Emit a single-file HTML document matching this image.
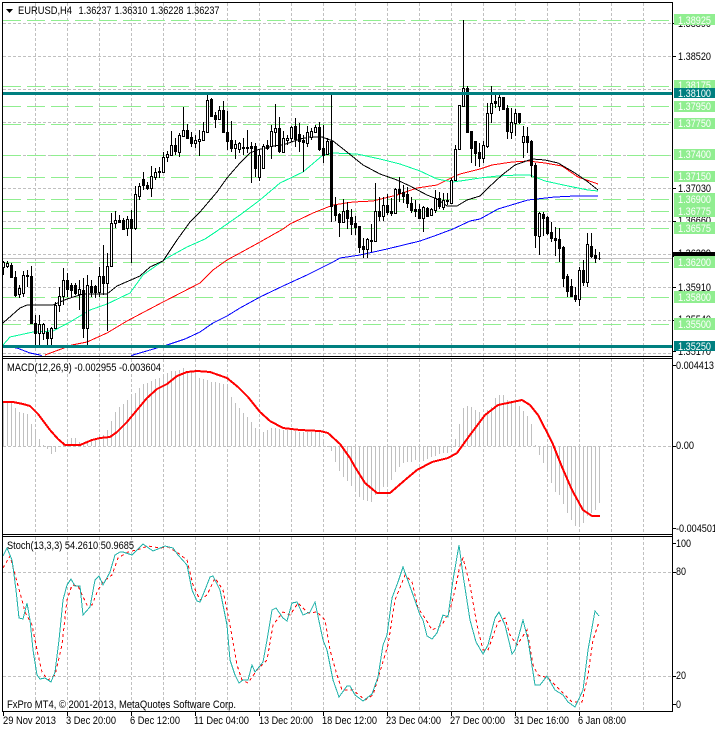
<!DOCTYPE html>
<html><head><meta charset="utf-8"><style>
html,body{margin:0;padding:0;background:#fff;width:715px;height:729px;overflow:hidden}
svg{display:block}
text{font-family:"Liberation Sans",sans-serif;font-size:11px;fill:#000}
.w text,text.w{fill:#fff}
.c{shape-rendering:crispEdges;fill:none}
</style></head><body>
<svg width="715" height="729" viewBox="0 0 715 729" xmlns="http://www.w3.org/2000/svg">
<defs><clipPath id="m"><rect x="3" y="3" width="669" height="353"/></clipPath></defs>
<rect width="715" height="729" fill="#fff"/>

<!-- grid -->
<g class="c" stroke="#c0c0c0" stroke-dasharray="3 2">
<path id="vg1" d="M35.5 3V356M67.5 3V356M99.5 3V356M131.5 3V356M163.5 3V356M195.5 3V356M227.5 3V356M259.5 3V356M291.5 3V356M323.5 3V356M355.5 3V356M387.5 3V356M419.5 3V356M451.5 3V356M483.5 3V356M515.5 3V356M547.5 3V356M579.5 3V356M611.5 3V356M643.5 3V356"/>
<path d="M35.5 359V534M67.5 359V534M99.5 359V534M131.5 359V534M163.5 359V534M195.5 359V534M227.5 359V534M259.5 359V534M291.5 359V534M323.5 359V534M355.5 359V534M387.5 359V534M419.5 359V534M451.5 359V534M483.5 359V534M515.5 359V534M547.5 359V534M579.5 359V534M611.5 359V534M643.5 359V534"/>
<path d="M35.5 537V711M67.5 537V711M99.5 537V711M131.5 537V711M163.5 537V711M195.5 537V711M227.5 537V711M259.5 537V711M291.5 537V711M323.5 537V711M355.5 537V711M387.5 537V711M419.5 537V711M451.5 537V711M483.5 537V711M515.5 537V711M547.5 537V711M579.5 537V711M611.5 537V711M643.5 537V711"/>
<path d="M3 23.5H672M3 56.5H672M3 89.5H672M3 122.5H672M3 155.5H672M3 188.5H672M3 221.5H672M3 254.5H672M3 287.5H672M3 320.5H672M3 353.5H672M3 446.5H672M3 572.5H672M3 676.5H672"/>
</g>
<path class="c" stroke="#c0c0c0" d="M3 258.5H672"/>

<!-- green levels -->
<path class="c" stroke="#90ee90" stroke-dasharray="18 6" d="M3 20.5H672M3 86.5H672M3 106.5H672M3 124.5H672M3 155.5H672M3 177.5H672M3 199.5H672M3 211.5H672M3 228.5H672M3 262.5H672M3 297.5H672M3 324.5H672"/>

<g clip-path="url(#m)">
<!-- MAs -->
<polyline class="c" stroke="#0000ff" points="3,346 17,348 30,353 40,355 45,358 128,358 133,355 150,350 167,345 185,339 200,332 213,323 227,316 240,308 260,297 283,286 307,275 333,262 340,258 360,255 387,249 420,241 437,235 453,229 470,221 480,219 498,209 518,203 528,200 555,197 575,196 598,196"/>
<polyline class="c" stroke="#ff0000" points="45,355 72,345 87,342 107,333 127,321 163,302 200,283 213,270 227,260 240,253 260,242 283,229 290,224 313,213 333,205 353,202 373,201 397,195 417,188 437,185 453,177 460,174 480,169 492,165 512,162 528,161 545,163 562,166 578,177 598,184"/>
<polyline class="c" stroke="#00fa9a" points="3,345 10,337 33,332 53,331 70,322 90,310 107,304 130,293 143,275 167,258 187,247 205,239 217,231 240,215 260,200 280,183 303,172 323,155 333,153 357,154 380,159 400,164 420,171 437,179 453,182 467,180 480,178 498,176 518,175 530,175 545,181 568,186 588,190 598,191"/>
<polyline class="c" stroke="#000" points="3,323 20,308 27,305 53,305 67,299 83,294 107,294 117,286 140,276 150,267 163,261 177,240 190,222 200,212 217,192 227,178 240,163 250,153 257,150 273,146 283,145 300,139 310,137 322,137 333,141 347,152 363,165 380,174 397,180 410,186 427,195 437,199 447,206 457,206 467,200 480,196 488,188 502,175 515,165 532,159 545,160 558,163 575,173 588,182 598,190"/>

<!-- wicks -->
<path class="c" stroke="#000" d="M3.5 261V275M7.5 261V268M11.5 263V277M15.5 271V297M19.5 285V298M23.5 271V297M27.5 270V287M31.5 266V323M35.5 315V347M39.5 315V347M43.5 323V340M47.5 328V347M51.5 327V345M55.5 302V328M59.5 287V312M63.5 268V305M67.5 273V297M71.5 283V297M75.5 283V295M79.5 280V310M83.5 278V338M87.5 275V345M91.5 280V297M95.5 285V298M99.5 267V297M103.5 245V295M107.5 253V331M111.5 213V267M115.5 211V228M119.5 215V223M123.5 218V230M127.5 216V236M131.5 210V263M135.5 186V230M139.5 183V200M143.5 172V190M147.5 182V190M151.5 166V197M155.5 168V180M159.5 167V178M163.5 152V172M167.5 151V162M171.5 131V155M175.5 138V155M179.5 133V157M183.5 107V137M187.5 124V138M191.5 132V147M195.5 135V148M199.5 130V156M203.5 122V140M207.5 93V132M211.5 98V117M215.5 112V128M219.5 106V119M223.5 101V133M227.5 111V150M231.5 121V152M235.5 140V159M239.5 142V153M243.5 138V155M247.5 130V153M251.5 142V183M255.5 143V177M259.5 150V181M263.5 144V168M267.5 140V150M271.5 125V159M275.5 104V147M279.5 117V153M283.5 131V152M287.5 135V145M291.5 126V142M295.5 118V147M299.5 123V152M303.5 135V172M307.5 126V147M311.5 128V140M315.5 125V133M319.5 122V151M323.5 125V163M327.5 138V155M331.5 93V222M335.5 197V221M339.5 213V237M343.5 199V223M347.5 202V229M351.5 209V235M355.5 216V235M359.5 226V253M363.5 238V258M367.5 238V258M371.5 224V252M375.5 183V241M379.5 197V221M383.5 197V221M387.5 194V215M391.5 198V216M395.5 188V213M399.5 177V202M403.5 185V203M407.5 187V208M411.5 197V213M415.5 200V217M419.5 204V218M423.5 206V232M427.5 207V217M431.5 208V215M435.5 190V213M439.5 192V209M443.5 193V210M447.5 193V205M451.5 178V204M455.5 145V181M459.5 105V149M463.5 20V107M467.5 86V132M471.5 131V163M475.5 141V166M479.5 143V167M483.5 141V163M487.5 103V148M491.5 86V123M495.5 93V108M499.5 93V111M503.5 97V110M507.5 105V139M511.5 108V139M515.5 109V136M519.5 113V124M523.5 126V158M527.5 127V153M531.5 140V177M535.5 163V248M539.5 212V255M543.5 212V236M547.5 216V235M551.5 222V242M555.5 227V256M559.5 228V262M563.5 246V287M567.5 274V297M571.5 279V297M575.5 287V302M579.5 267V306M583.5 260V286M587.5 233V287M591.5 233V258M595.5 249V263M599.5 252V260"/>

<!-- white bodies -->
<path class="c" style="fill:#fff" stroke="#000" d="M2.5 262.5h2V267.5h-2zM6.5 263.5h2V266.5h-2zM18.5 288.5h2V294.5h-2zM22.5 275.5h2V293.5h-2zM38.5 324.5h2V333.5h-2zM42.5 324.5h2V333.5h-2zM50.5 328.5h2V338.5h-2zM54.5 305.5h2V328.5h-2zM58.5 296.5h2V305.5h-2zM62.5 280.5h2V296.5h-2zM78.5 289.5h2V294.5h-2zM86.5 285.5h2V328.5h-2zM98.5 276.5h2V292.5h-2zM106.5 266.5h2V283.5h-2zM110.5 223.5h2V266.5h-2zM114.5 220.5h2V223.5h-2zM126.5 219.5h2V228.5h-2zM134.5 194.5h2V228.5h-2zM138.5 186.5h2V196.5h-2zM150.5 176.5h2V188.5h-2zM154.5 172.5h2V177.5h-2zM158.5 171.5h2V172.5h-2zM162.5 157.5h2V172.5h-2zM166.5 154.5h2V157.5h-2zM170.5 145.5h2V155.5h-2zM178.5 135.5h2V152.5h-2zM182.5 130.5h2V136.5h-2zM194.5 140.5h2V143.5h-2zM198.5 139.5h2V141.5h-2zM202.5 131.5h2V140.5h-2zM206.5 100.5h2V132.5h-2zM218.5 110.5h2V119.5h-2zM234.5 144.5h2V148.5h-2zM238.5 143.5h2V149.5h-2zM258.5 155.5h2V177.5h-2zM262.5 146.5h2V168.5h-2zM270.5 131.5h2V146.5h-2zM274.5 128.5h2V132.5h-2zM282.5 138.5h2V152.5h-2zM286.5 138.5h2V140.5h-2zM290.5 127.5h2V138.5h-2zM306.5 132.5h2V143.5h-2zM310.5 131.5h2V137.5h-2zM314.5 127.5h2V132.5h-2zM326.5 141.5h2V154.5h-2zM342.5 211.5h2V222.5h-2zM366.5 239.5h2V249.5h-2zM374.5 211.5h2V241.5h-2zM382.5 205.5h2V216.5h-2zM394.5 189.5h2V213.5h-2zM422.5 207.5h2V218.5h-2zM430.5 209.5h2V215.5h-2zM434.5 198.5h2V210.5h-2zM442.5 200.5h2V207.5h-2zM450.5 180.5h2V203.5h-2zM454.5 149.5h2V180.5h-2zM458.5 105.5h2V149.5h-2zM462.5 88.5h2V106.5h-2zM482.5 145.5h2V158.5h-2zM486.5 113.5h2V146.5h-2zM490.5 103.5h2V113.5h-2zM498.5 97.5h2V106.5h-2zM510.5 122.5h2V132.5h-2zM514.5 113.5h2V123.5h-2zM522.5 136.5h2V142.5h-2zM538.5 213.5h2V236.5h-2zM578.5 270.5h2V299.5h-2zM586.5 244.5h2V282.5h-2z"/>

<!-- black bodies -->
<path class="c" style="fill:#000" stroke="#000" d="M10.5 265.5h2V277.5h-2zM14.5 277.5h2V295.5h-2zM26.5 275.5h2V276.5h-2zM30.5 276.5h2V323.5h-2zM34.5 323.5h2V333.5h-2zM46.5 332.5h2V338.5h-2zM66.5 280.5h2V289.5h-2zM70.5 285.5h2V290.5h-2zM74.5 285.5h2V293.5h-2zM82.5 290.5h2V328.5h-2zM90.5 286.5h2V292.5h-2zM94.5 286.5h2V292.5h-2zM102.5 276.5h2V283.5h-2zM118.5 220.5h2V222.5h-2zM122.5 220.5h2V229.5h-2zM130.5 219.5h2V228.5h-2zM142.5 179.5h2V185.5h-2zM146.5 185.5h2V188.5h-2zM174.5 145.5h2V151.5h-2zM186.5 130.5h2V138.5h-2zM190.5 137.5h2V143.5h-2zM210.5 99.5h2V116.5h-2zM214.5 115.5h2V119.5h-2zM222.5 110.5h2V132.5h-2zM226.5 132.5h2V141.5h-2zM230.5 140.5h2V148.5h-2zM242.5 147.5h2V148.5h-2zM246.5 147.5h2V148.5h-2zM250.5 146.5h2V148.5h-2zM254.5 146.5h2V168.5h-2zM266.5 145.5h2V148.5h-2zM278.5 128.5h2V151.5h-2zM294.5 126.5h2V139.5h-2zM298.5 134.5h2V141.5h-2zM302.5 140.5h2V142.5h-2zM318.5 127.5h2V149.5h-2zM322.5 148.5h2V155.5h-2zM330.5 141.5h2V206.5h-2zM334.5 205.5h2V215.5h-2zM338.5 214.5h2V222.5h-2zM346.5 210.5h2V218.5h-2zM350.5 217.5h2V224.5h-2zM354.5 223.5h2V227.5h-2zM358.5 226.5h2V247.5h-2zM362.5 246.5h2V249.5h-2zM370.5 240.5h2V241.5h-2zM378.5 211.5h2V216.5h-2zM386.5 205.5h2V212.5h-2zM390.5 211.5h2V213.5h-2zM398.5 189.5h2V193.5h-2zM402.5 192.5h2V196.5h-2zM406.5 194.5h2V203.5h-2zM410.5 203.5h2V210.5h-2zM414.5 209.5h2V211.5h-2zM418.5 209.5h2V218.5h-2zM426.5 208.5h2V216.5h-2zM438.5 198.5h2V206.5h-2zM446.5 200.5h2V201.5h-2zM466.5 88.5h2V132.5h-2zM470.5 131.5h2V148.5h-2zM474.5 141.5h2V153.5h-2zM478.5 152.5h2V158.5h-2zM494.5 101.5h2V103.5h-2zM502.5 97.5h2V109.5h-2zM506.5 108.5h2V131.5h-2zM518.5 113.5h2V122.5h-2zM526.5 136.5h2V142.5h-2zM530.5 141.5h2V165.5h-2zM534.5 165.5h2V235.5h-2zM542.5 214.5h2V218.5h-2zM546.5 217.5h2V233.5h-2zM550.5 232.5h2V238.5h-2zM554.5 238.5h2V240.5h-2zM558.5 239.5h2V248.5h-2zM562.5 247.5h2V278.5h-2zM566.5 276.5h2V291.5h-2zM570.5 286.5h2V296.5h-2zM574.5 295.5h2V299.5h-2zM582.5 270.5h2V282.5h-2zM590.5 246.5h2V256.5h-2zM594.5 255.5h2V258.5h-2zM598.5 258.5h2V258.5h-2z"/>
</g>

<!-- teal levels -->
<rect x="3" y="92" width="669" height="3" fill="#008080"/>
<rect x="3" y="345" width="669" height="3" fill="#008080"/>

<!-- MACD histogram -->
<path class="c" stroke="#c0c0c0" d="M3.5 446V402M7.5 446V402M11.5 446V403M15.5 446V408M19.5 446V412M23.5 446V413M27.5 446V414M31.5 446V424M35.5 446V432M39.5 446V439M43.5 446V445M47.5 446V449M51.5 446V454M55.5 446V452M59.5 446V447M63.5 446V442M67.5 446V440M71.5 446V438M75.5 446V438M79.5 446V442M83.5 446V443M87.5 446V443M91.5 446V440M95.5 446V438M99.5 446V435M103.5 446V435M107.5 446V430M111.5 446V421M115.5 446V412M119.5 446V407M123.5 446V404M127.5 446V400M131.5 446V394M135.5 446V393M139.5 446V388M143.5 446V384M147.5 446V383M151.5 446V381M155.5 446V379M159.5 446V378M163.5 446V375M167.5 446V373M171.5 446V371M175.5 446V371M179.5 446V370M183.5 446V368M187.5 446V371M191.5 446V372M195.5 446V372M199.5 446V378M203.5 446V379M207.5 446V380M211.5 446V382M215.5 446V382M219.5 446V383M223.5 446V384M227.5 446V387M231.5 446V397M235.5 446V403M239.5 446V408M243.5 446V413M247.5 446V417M251.5 446V422M255.5 446V428M259.5 446V431M263.5 446V432M267.5 446V430M271.5 446V428M275.5 446V428M279.5 446V429M283.5 446V430M287.5 446V430M291.5 446V431M295.5 446V431M299.5 446V432M303.5 446V432M307.5 446V432M311.5 446V432M315.5 446V432M319.5 446V432M323.5 446V440M327.5 446V447M331.5 446V451M335.5 446V462M339.5 446V471M343.5 446V477M347.5 446V481M351.5 446V486M355.5 446V491M359.5 446V497M363.5 446V500M367.5 446V501M371.5 446V502M375.5 446V495M379.5 446V492M383.5 446V487M387.5 446V485M391.5 446V480M395.5 446V472M399.5 446V467M403.5 446V463M407.5 446V462M411.5 446V462M415.5 446V460M419.5 446V461M423.5 446V461M427.5 446V459M431.5 446V457M435.5 446V456M439.5 446V454M443.5 446V453M447.5 446V453M451.5 446V448M455.5 446V439M459.5 446V424M463.5 446V408M467.5 446V406M471.5 446V407M475.5 446V410M479.5 446V412M483.5 446V415M487.5 446V410M491.5 446V407M495.5 446V398M499.5 446V395M503.5 446V395M507.5 446V400M511.5 446V401M515.5 446V400M519.5 446V406M523.5 446V411M527.5 446V416M531.5 446V424M535.5 446V445M539.5 446V455M543.5 446V463M547.5 446V472M551.5 446V483M555.5 446V492M559.5 446V495M563.5 446V504M567.5 446V513M571.5 446V520M575.5 446V526M579.5 446V527M583.5 446V523M587.5 446V516M591.5 446V513M595.5 446V510M599.5 446V503"/>
<polyline class="c" stroke="#ff0000" stroke-width="2" points="3,402 13,402 23,404 30,406 38,414 50,430 58,439 65,445 80,445 92,440 100,438 110,437 117,432 127,422 137,410 147,398 157,389 167,384 177,376 187,372 197,371 210,372 227,378 238,387 248,397 260,412 270,421 283,428 300,430 320,431 328,433 340,444 350,458 355,467 365,483 377,493 390,493 405,480 417,470 432,462 448,458 457,453 470,435 485,415 498,405 522,400 530,405 538,415 552,442 562,467 572,490 583,510 592,516 600,516"/>

<!-- Stochastic -->
<polyline class="c" stroke="#ff0000" stroke-dasharray="3 3" points="3,568 10,556 17,582 22,600 25,612 32,625 37,650 42,672 48,680 55,675 62,645 67,600 72,585 78,586 87,605 92,605 98,590 103,582 112,575 118,558 128,552 140,549 148,546 160,548 168,547 178,553 187,560 193,585 200,600 207,595 215,578 223,590 230,625 237,665 242,680 248,683 257,670 267,660 273,625 283,612 290,615 298,603 308,613 317,612 325,620 330,650 337,675 342,690 353,690 365,700 373,695 382,665 388,645 395,600 405,575 412,582 418,608 425,618 432,630 442,625 450,610 455,590 460,565 463,558 470,585 477,625 483,650 488,650 498,622 505,618 510,635 517,645 527,630 533,665 538,675 548,678 562,692 572,702 582,702 588,675 593,640 599,622"/>
<polyline class="c" stroke="#20b2aa" points="3,556 7,548 12,560 13,567 16,590 19,618 23,619 27,603 30,620 33,650 37,675 40,679 45,678 51,682 55,672 59,640 63,600 67,585 71,579 75,586 80,586 83,615 90,607 95,580 99,576 103,585 110,572 115,555 120,552 123,552 132,555 143,544 153,551 165,546 173,548 178,555 187,565 192,590 197,601 200,602 205,590 210,577 213,576 220,590 227,625 230,660 235,675 239,683 243,680 248,680 252,665 255,672 263,662 267,640 272,610 276,608 283,618 287,621 292,603 297,602 303,615 310,612 315,602 323,640 327,650 333,680 339,697 347,686 350,686 355,695 363,701 372,694 378,677 383,645 387,635 392,598 398,582 403,567 412,592 420,615 423,620 427,636 432,639 437,633 443,615 448,617 453,580 459,545 463,575 470,620 476,642 483,654 488,645 495,618 499,612 505,625 512,654 515,650 523,620 528,640 535,685 540,685 547,676 555,690 563,695 568,702 575,707 583,690 588,650 595,611 599,616"/>

<!-- frames -->
<path class="c" stroke="#000" d="M2.5 2V712M672.5 2V712M2 2.5H673M2 356.5H673M2 358.5H673M2 534.5H673M2 536.5H673M2 711.5H673"/>
<path class="c" stroke="#000" d="M672 56.5h4M672 23.5h4M672 188.5h4M672 221.5h4M672 254.5h4M672 287.5h4M672 320.5h4M672 351.5h4M672 365.5h4M672 446.5h4M672 528.5h4M672 543.5h4M672 572.5h4M672 676.5h4M672 704.5h4M3.5 711v5M67.5 711v5M131.5 711v5M195.5 711v5M259.5 711v5M323.5 711v5M387.5 711v5M451.5 711v5M515.5 711v5M579.5 711v5"/>

<!-- header -->
<path d="M6 9h7l-3.500 4z" fill="#000"/>
<text x="18" y="14" textLength="54" lengthAdjust="spacingAndGlyphs">EURUSD,H4</text>
<text x="78.500" y="14" textLength="33" lengthAdjust="spacingAndGlyphs">1.36237</text>
<text x="114.500" y="14" textLength="33" lengthAdjust="spacingAndGlyphs">1.36310</text>
<text x="150.500" y="14" textLength="33" lengthAdjust="spacingAndGlyphs">1.36228</text>
<text x="186.500" y="14" textLength="33" lengthAdjust="spacingAndGlyphs">1.36237</text>
<text x="7" y="371" textLength="154" lengthAdjust="spacingAndGlyphs">MACD(12,26,9) -0.002955 -0.003604</text>
<text x="7" y="549" textLength="127" lengthAdjust="spacingAndGlyphs">Stoch(13,3,3) 54.2610 50.9685</text>
<text x="7" y="708" textLength="229" lengthAdjust="spacingAndGlyphs">FxPro MT4, © 2001-2013, MetaQuotes Software Corp.</text>

<!-- right axis plain labels -->
<g>
<text x="678" y="27" textLength="33" lengthAdjust="spacingAndGlyphs">1.38890</text>
<text x="678" y="60" textLength="33" lengthAdjust="spacingAndGlyphs">1.38520</text>
<text x="678" y="192" textLength="33" lengthAdjust="spacingAndGlyphs">1.37030</text>
<text x="678" y="224" textLength="33" lengthAdjust="spacingAndGlyphs">1.36660</text>
<text x="678" y="257" textLength="33" lengthAdjust="spacingAndGlyphs">1.36299</text>
<text x="678" y="291" textLength="33" lengthAdjust="spacingAndGlyphs">1.35910</text>
<text x="678" y="323" textLength="33" lengthAdjust="spacingAndGlyphs">1.35540</text>
<text x="678" y="355" textLength="33" lengthAdjust="spacingAndGlyphs">1.35170</text>
<text x="676" y="369" textLength="38" lengthAdjust="spacingAndGlyphs">0.004413</text>
<text x="676" y="449" textLength="18" lengthAdjust="spacingAndGlyphs">0.00</text>
<text x="676" y="532" textLength="41" lengthAdjust="spacingAndGlyphs">-0.004501</text>
<text x="676" y="547" textLength="15" lengthAdjust="spacingAndGlyphs">100</text>
<text x="676" y="575" textLength="10" lengthAdjust="spacingAndGlyphs">80</text>
<text x="676" y="679" textLength="10" lengthAdjust="spacingAndGlyphs">20</text>
<text x="676" y="708" textLength="5" lengthAdjust="spacingAndGlyphs">0</text>
</g>
<rect x="673" y="252" width="42" height="5" fill="#000"/>

<!-- right axis coloured labels -->
<g fill="#90ee90">
<rect x="674" y="14" width="41" height="11"/>
<rect x="674" y="80" width="41" height="11"/>
<rect x="674" y="101" width="41" height="11"/>
<rect x="674" y="118" width="41" height="11"/>
<rect x="674" y="149" width="41" height="11"/>
<rect x="674" y="171" width="41" height="11"/>
<rect x="674" y="193" width="41" height="12"/>
<rect x="674" y="205" width="41" height="12"/>
<rect x="674" y="222" width="41" height="12"/>
<rect x="674" y="256" width="41" height="12"/>
<rect x="674" y="291" width="41" height="12"/>
<rect x="674" y="318" width="41" height="12"/>
</g>
<g class="w">
<text x="678" y="24" textLength="33" lengthAdjust="spacingAndGlyphs">1.38925</text>
<text x="678" y="89" textLength="33" lengthAdjust="spacingAndGlyphs">1.38175</text>
<text x="678" y="110" textLength="33" lengthAdjust="spacingAndGlyphs">1.37950</text>
<text x="678" y="127" textLength="33" lengthAdjust="spacingAndGlyphs">1.37750</text>
<text x="678" y="158" textLength="33" lengthAdjust="spacingAndGlyphs">1.37400</text>
<text x="678" y="180" textLength="33" lengthAdjust="spacingAndGlyphs">1.37150</text>
<text x="678" y="203" textLength="33" lengthAdjust="spacingAndGlyphs">1.36900</text>
<text x="678" y="215" textLength="33" lengthAdjust="spacingAndGlyphs">1.36775</text>
<text x="678" y="232" textLength="33" lengthAdjust="spacingAndGlyphs">1.36575</text>
<text x="678" y="266" textLength="33" lengthAdjust="spacingAndGlyphs">1.36200</text>
<text x="678" y="301" textLength="33" lengthAdjust="spacingAndGlyphs">1.35800</text>
<text x="678" y="328" textLength="33" lengthAdjust="spacingAndGlyphs">1.35500</text>
</g>
<rect x="674" y="88" width="41" height="10" fill="#008080"/>
<rect x="674" y="341" width="41" height="10" fill="#008080"/>
<g class="w">
<text x="678" y="97" textLength="33" lengthAdjust="spacingAndGlyphs">1.38100</text>
<text x="678" y="350" textLength="33" lengthAdjust="spacingAndGlyphs">1.35250</text>
</g>

<!-- bottom axis -->
<text x="3" y="724" textLength="53" lengthAdjust="spacingAndGlyphs">29 Nov 2013</text>
<text x="66" y="724" textLength="50" lengthAdjust="spacingAndGlyphs">3 Dec 20:00</text>
<text x="130" y="724" textLength="50" lengthAdjust="spacingAndGlyphs">6 Dec 12:00</text>
<text x="194" y="724" textLength="55" lengthAdjust="spacingAndGlyphs">11 Dec 04:00</text>
<text x="259" y="724" textLength="54" lengthAdjust="spacingAndGlyphs">13 Dec 20:00</text>
<text x="322" y="724" textLength="55" lengthAdjust="spacingAndGlyphs">18 Dec 12:00</text>
<text x="386" y="724" textLength="55" lengthAdjust="spacingAndGlyphs">23 Dec 04:00</text>
<text x="450" y="724" textLength="55" lengthAdjust="spacingAndGlyphs">27 Dec 00:00</text>
<text x="514" y="724" textLength="55" lengthAdjust="spacingAndGlyphs">31 Dec 16:00</text>
<text x="578" y="724" textLength="48" lengthAdjust="spacingAndGlyphs">6 Jan 08:00</text>
</svg>
</body></html>
